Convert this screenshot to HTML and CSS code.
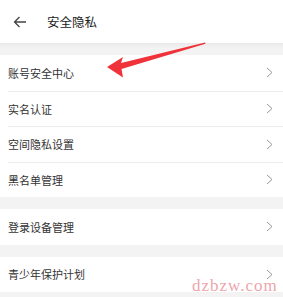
FILE: index.html
```html
<!DOCTYPE html>
<html>
<head>
<meta charset="utf-8">
<link rel="stylesheet" href="styles.css">
</head>
<body>
<div class="page">
  <header class="header">
    <svg class="back" width="14" height="12" viewBox="0 0 14 12"><path d="M13 6H1.5M6.5 1L1.5 6l5 5" fill="none" stroke="#444" stroke-width="1.3"/></svg>
    <span class="title">安全隐私</span>
  </header>
  <div class="gap first"></div>
  <div class="group">
    <div class="row"><span class="label">账号安全中心</span><svg class="chev" width="7" height="11" viewBox="0 0 7 11"><path d="M1 1l5 4.5L1 10" fill="none" stroke="#999" stroke-width="1"/></svg></div>
    <div class="row"><span class="label">实名认证</span><svg class="chev" width="7" height="11" viewBox="0 0 7 11"><path d="M1 1l5 4.5L1 10" fill="none" stroke="#999" stroke-width="1"/></svg></div>
    <div class="row"><span class="label">空间隐私设置</span><svg class="chev" width="7" height="11" viewBox="0 0 7 11"><path d="M1 1l5 4.5L1 10" fill="none" stroke="#999" stroke-width="1"/></svg></div>
    <div class="row"><span class="label">黑名单管理</span><svg class="chev" width="7" height="11" viewBox="0 0 7 11"><path d="M1 1l5 4.5L1 10" fill="none" stroke="#999" stroke-width="1"/></svg></div>
  </div>
  <div class="gap"></div>
  <div class="group">
    <div class="row"><span class="label">登录设备管理</span><svg class="chev" width="7" height="11" viewBox="0 0 7 11"><path d="M1 1l5 4.5L1 10" fill="none" stroke="#999" stroke-width="1"/></svg></div>
  </div>
  <div class="gap"></div>
  <div class="group">
    <div class="row"><span class="label">青少年保护计划</span><svg class="chev" width="7" height="11" viewBox="0 0 7 11"><path d="M1 1l5 4.5L1 10" fill="none" stroke="#999" stroke-width="1"/></svg></div>
  </div>
  <div class="gap rest"></div>
  <svg class="arrow" width="283" height="297" viewBox="0 0 283 297"><path d="M205 42.5 L121 63 L123 57 L107 67 L123 77.5 L121.5 69 L205.5 43.8 Z" fill="#f0333a"/></svg>
  <div class="mark">dzbzw.com</div>
</div>
</body>
</html>
```
FILE: styles.css
```css
html, body { margin: 0; padding: 0; }
body {
  font-family: "Noto Sans CJK SC", "Noto Sans", sans-serif;
  color: #333;
  background: #f3f3f3;
}
.page { position: relative; width: 283px; height: 297px; overflow: hidden; }
.header {
  height: 43px;
  background: #fff;
  display: flex;
  align-items: center;
}
.back { margin-left: 13px; margin-right: 20px; }
.title { font-size: 12.5px; color: #222; }
.gap { height: 12px; background: #f3f3f3; }
.gap.first { background: linear-gradient(#e9e9e9, #f3f3f3 5px); }
.gap.rest { height: 10px; }
.group { background: #fff; }
.row {
  height: 35.5px;
  margin-left: 8px;
  padding-right: 10px;
  display: flex;
  align-items: center;
  justify-content: space-between;
  box-sizing: border-box;
}
.label { font-size: 11px; color: #333; }
.row + .row { border-top: 1px solid #ececec; }
.chev { display: block; }
.arrow { position: absolute; left: 0; top: 0; }
.mark {
  position: absolute;
  left: 192px; top: 276px;
  font-family: "Liberation Serif", serif;
  font-size: 17px;
  letter-spacing: 1px;
  color: rgba(225, 100, 110, 0.6);
}
```
